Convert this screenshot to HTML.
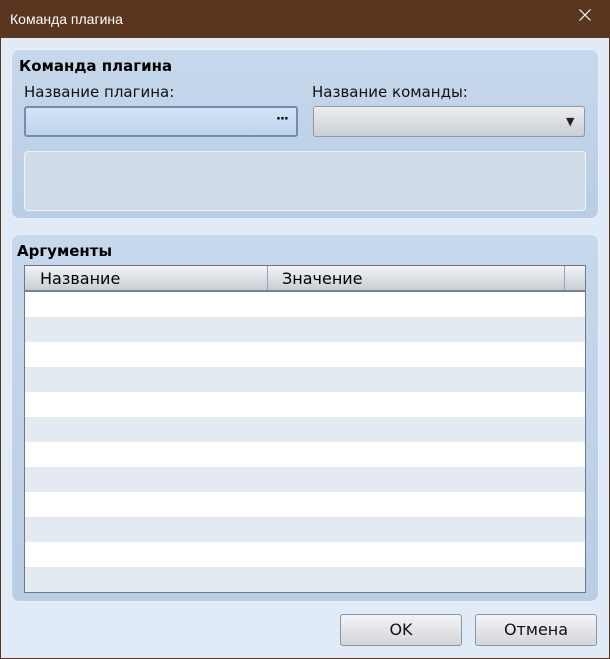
<!DOCTYPE html><html><head><style>
*{box-sizing:border-box;margin:0;padding:0}
body{width:610px;height:659px;overflow:hidden;font-family:"DejaVu Sans","Liberation Sans",sans-serif;background:#5a3520;position:relative}
.abs{position:absolute}
#title{left:10px;top:11px;color:#fff;font-size:14px;font-family:"Liberation Sans",sans-serif}
#x{left:578px;top:8px;}
#body{left:1px;top:38px;width:608px;height:620px;background:#e1ebf7}
.panel{background:linear-gradient(#c6d8ec,#b9cde4);border:1px solid #e8f0fa;border-radius:8px}
.h{font-weight:bold;font-size:15px;color:#000}
.l{font-size:15px;color:#111}
.btn{border:1px solid #8a95a2;border-radius:3px;background:linear-gradient(#f3f4f6,#d3d6da);font-size:16px;text-align:center;line-height:30px;color:#111}
</style></head><body>
<div class="abs" id="title">Команда плагина</div>
<svg class="abs" id="x" width="14" height="14" viewBox="0 0 14 14"><path d="M1.5 1.5L12.5 12.5M12.5 1.5L1.5 12.5" stroke="#fff" stroke-width="1.2"/></svg>
<div class="abs" id="body"></div>
<div class="abs panel" style="left:11px;top:49px;width:588px;height:170px"></div>
<div class="abs h" style="left:19px;top:57px">Команда плагина</div>
<div class="abs l" style="left:24px;top:83px">Название плагина:</div>
<div class="abs l" style="left:312px;top:83px">Название команды:</div>
<div class="abs" style="left:24px;top:106px;width:274px;height:31px;border:2px solid #6f8fb2;border-radius:3px;background:linear-gradient(#d4e4f6,#bcd3ee);"></div>
<div class="abs" style="left:276px;top:112px;font-weight:bold;font-size:13px;letter-spacing:-1px">···</div>
<div class="abs" style="left:313px;top:106px;width:272px;height:31px;border:1px solid #8d98a4;border-radius:3px;background:linear-gradient(#eceef0,#c9ced4)"></div>
<div class="abs" style="left:566px;top:115px;font-size:11px;color:#222">▼</div>
<div class="abs" style="left:24px;top:151px;width:562px;height:60px;border:1px solid #eef3f9;border-radius:4px;background:#d0dce8"></div>
<div class="abs panel" style="left:11px;top:234px;width:588px;height:368px"></div>
<div class="abs h" style="left:17px;top:242px">Аргументы</div>
<div class="abs" style="left:24px;top:265px;width:562px;height:328px;border:1px solid #6e7884;background:repeating-linear-gradient(#fff 0 25px,#e4eaf1 25px 50px) 0 26px/100% 100% no-repeat,#fff;background-color:#fff">
<div style="height:26px;background:linear-gradient(#f2f4f6,#c8ced5);border-bottom:2px solid #79838e;position:relative;font-size:16px">
<span class="abs" style="left:15px;top:3px">Название</span>
<span class="abs" style="left:242px;top:0;height:24px;border-left:1px solid #9aa2ab"></span>
<span class="abs" style="left:257px;top:3px">Значение</span>
<span class="abs" style="left:539px;top:0;height:24px;border-left:1px solid #9aa2ab"></span>
</div></div>
<div class="abs btn" style="left:340px;top:614px;width:122px;height:32px">OK</div>
<div class="abs btn" style="left:475px;top:614px;width:122px;height:32px">Отмена</div>
</body></html>
